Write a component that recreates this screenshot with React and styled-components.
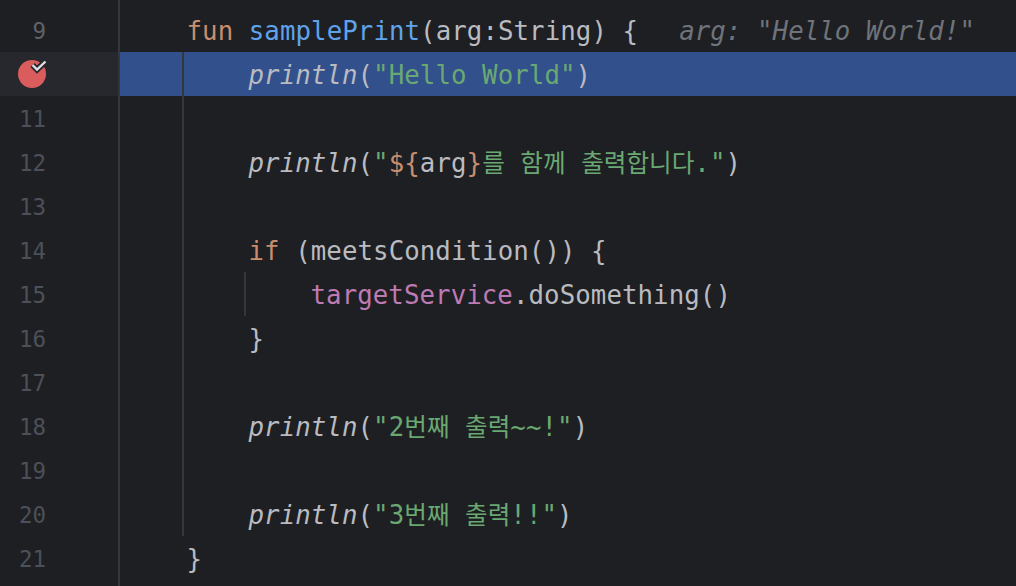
import React from 'react';
import styled, { createGlobalStyle } from 'styled-components';

const Global = createGlobalStyle`
  html, body { margin: 0; padding: 0; background: #1e1f22; overflow: hidden; }
`

const COLORS = {
  plain: '#b9bbc1',
  keyword: '#c88d6e',
  fn: '#5ea3ec',
  string: '#6aa873',
  property: '#bd7ab3',
}

const Editor = styled.div`
  display: flex;
  width: 1016px;
  height: 586px;
  overflow: hidden;
  background: #1e1f22;
  font-family: "DejaVu Sans Mono", "Noto Sans CJK KR", monospace;
`
const Gutter = styled.div`
  flex: none;
  width: 118px;
  padding-top: 8px;
  border-right: 2px solid #34363b;
`
const GutterRow = styled.div`
  display: flex;
  align-items: center;
  justify-content: flex-end;
  box-sizing: border-box;
  height: 44px;
  padding-top: 2px;
  padding-right: 72px;
  background: ${props => props.$active ? '#26282e' : 'transparent'};
  color: ${props => props.$bright ? '#5f6269' : '#4b5059'};
  font-size: 22.5px;
`
const Breakpoint = styled.svg`
  display: block;
  width: 28px;
  height: 28px;
  margin-top: -2px;
  overflow: visible;
`
const Code = styled.div`
  position: relative;
  flex: 1;
  padding-top: 8px;
`
const Guide = styled.div`
  position: absolute;
  top: ${props => props.$top}px;
  left: ${props => props.$left}px;
  width: 2px;
  height: ${props => props.$height}px;
  background: #34363b;
`
const Row = styled.div`
  height: 44px;
  padding-left: ${props => 66.5 + props.$indent * 62}px;
  background: ${props => props.$selected ? '#32508b' : 'transparent'};
  font-size: 25.75px;
  line-height: 46px;
  letter-spacing: 0.07px;
  white-space: pre;
`
const Token = styled.span`
  color: ${props => COLORS[props.$kind || 'plain']};
  font-style: ${props => props.$italic ? 'italic' : 'normal'};
`
const Hangul = styled.span`
  color: ${COLORS.string};
  font-family: "Noto Sans CJK KR", sans-serif;
  font-size: 24.6px;
  line-height: 1;
  letter-spacing: 0;
`
const Hint = styled.span`
  margin-left: 41px;
  color: #6f737a;
  font-style: italic;
`

const Print = ({ children }) => (
  <>
    <Token $italic>println</Token>
    <Token>(</Token>
    {children}
    <Token>)</Token>
  </>
)

const LINES = [
  {
    no: 9,
    bright: true,
    indent: 0,
    content: (
      <>
        <Token $kind="keyword">fun </Token>
        <Token $kind="fn">samplePrint</Token>
        <Token>(arg:String) {'{'}</Token>
        <Hint>arg: "Hello World!"</Hint>
      </>
    ),
  },
  { no: 10, breakpoint: true, selected: true, indent: 1, content: <Print><Token $kind="string">"Hello World"</Token></Print> },
  { no: 11, indent: 0 },
  {
    no: 12,
    indent: 1,
    content: (
      <Print>
        <Token $kind="string">"</Token>
        <Token $kind="keyword">{'${'}</Token>
        <Token>arg</Token>
        <Token $kind="keyword">{'}'}</Token>
        <Hangul>를</Hangul>
        <Token $kind="string"> </Token>
        <Hangul>함께</Hangul>
        <Token $kind="string"> </Token>
        <Hangul>출력합니다</Hangul>
        <Token $kind="string">."</Token>
      </Print>
    ),
  },
  { no: 13, indent: 0 },
  {
    no: 14,
    indent: 1,
    content: (
      <>
        <Token $kind="keyword">if </Token>
        <Token>(meetsCondition()) {'{'}</Token>
      </>
    ),
  },
  {
    no: 15,
    indent: 2,
    content: (
      <>
        <Token $kind="property">targetService</Token>
        <Token>.doSomething()</Token>
      </>
    ),
  },
  { no: 16, indent: 1, content: <Token>{'}'}</Token> },
  { no: 17, indent: 0 },
  {
    no: 18,
    indent: 1,
    content: (
      <Print>
        <Token $kind="string">"2</Token>
        <Hangul>번째</Hangul>
        <Token $kind="string"> </Token>
        <Hangul>출력</Hangul>
        <Token $kind="string">~~!"</Token>
      </Print>
    ),
  },
  { no: 19, indent: 0 },
  {
    no: 20,
    indent: 1,
    content: (
      <Print>
        <Token $kind="string">"3</Token>
        <Hangul>번째</Hangul>
        <Token $kind="string"> </Token>
        <Hangul>출력</Hangul>
        <Token $kind="string">!!"</Token>
      </Print>
    ),
  },
  { no: 21, indent: 0, content: <Token>{'}'}</Token> },
]

export default function App() {
  return (
    <Editor>
      <Global />
      <Gutter>
        {LINES.map(line => (
          <GutterRow key={line.no} $active={line.breakpoint} $bright={line.bright}>
            {line.breakpoint ? (
              <Breakpoint viewBox="0 0 28 28">
                <circle cx="14" cy="14" r="14" fill="#db5c5c" />
                <path d="M14.5 5 L19 9.5 L27.5 1.5" fill="none" stroke="#26282e" strokeWidth="6" />
                <path d="M14.5 5 L19 9.5 L27.5 1.5" fill="none" stroke="#dfe1e5" strokeWidth="2.4" />
              </Breakpoint>
            ) : line.no}
          </GutterRow>
        ))}
      </Gutter>
      <Code>
        {LINES.map(line => (
          <Row key={line.no} $indent={line.indent} $selected={line.selected}>
            {line.content}
          </Row>
        ))}
        <Guide $left={62} $top={52} $height={484} />
        <Guide $left={124} $top={272} $height={44} />
      </Code>
    </Editor>
  )
}
